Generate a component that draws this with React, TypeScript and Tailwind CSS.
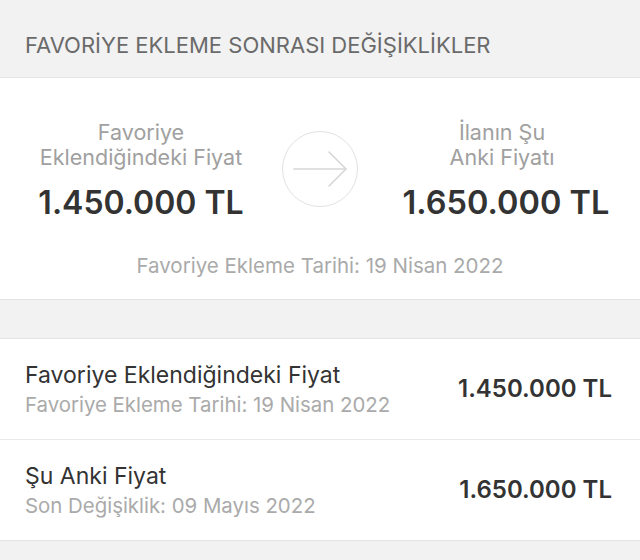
const font = { fontFamily: 'Inter, "Liberation Sans", Arial, sans-serif' };

function PriceRow({ title, sub, price }: { title: string; sub: string; price: string }) {
  return (
    <div className="flex h-[100px] items-center bg-white pl-[25px] pr-[28px]">
      <div className="flex-1">
        <div className="text-[23px] leading-[28px] text-[#333]">{title}</div>
        <div className="mt-[3px] text-[20.4px] leading-[26px] text-[#aaa]">{sub}</div>
      </div>
      <div className="text-[24px] font-semibold text-[#333]">{price}</div>
    </div>
  );
}

function Arrow() {
  return (
    <svg width="56" height="38" viewBox="0 0 56 38" fill="none" stroke="#d6d6d6" strokeWidth="1.6" strokeLinecap="round" strokeLinejoin="round">
      <path d="M2 19H54" />
      <path d="M37 2L54 19L37 36" />
    </svg>
  );
}

export default function App() {
  return (
    <div className="h-[560px] w-[640px] overflow-hidden bg-[#f2f2f2]" style={font}>
      <div className="flex h-[78px] items-end border-b border-[#e4e4e4] pb-[20px] pl-[25px]">
        <span className="text-[22px] leading-[24px] text-[#6a6a6a]">FAVORİYE EKLEME SONRASI DEĞİŞİKLİKLER</span>
      </div>

      <div className="h-[222px] border-b border-[#e4e4e4] bg-white pt-[42px]">
        <div className="flex items-start">
          <div className="flex w-[282px] flex-col items-center">
            <div className="text-center text-[21.5px] leading-[25px] text-[#a0a0a0]">
              Favoriye
              <br />
              Eklendiğindeki Fiyat
            </div>
            <div className="mt-[13px] text-[32px] font-semibold leading-[40px] text-[#333]">1.450.000 TL</div>
          </div>
          <div className="flex w-[76px] justify-center pt-[11px]">
            <div className="flex h-[76px] w-[76px] shrink-0 items-center justify-center rounded-full border border-[#e2e2e2]">
              <Arrow />
            </div>
          </div>
          <div className="flex flex-1 flex-col items-center pl-[6px]">
            <div className="text-center text-[21.5px] leading-[25px] text-[#a0a0a0]">
              İlanın Şu
              <br />
              Anki Fiyatı
            </div>
            <div className="mt-[13px] pl-[8px] text-[32.5px] font-semibold leading-[40px] text-[#333]">1.650.000 TL</div>
          </div>
        </div>
        <div className="mt-[30px] text-center text-[20.5px] leading-[26px] text-[#aaa]">
          Favoriye Ekleme Tarihi: 19 Nisan 2022
        </div>
      </div>

      <div className="h-[38px]" />

      <div className="border-y border-[#e4e4e4]">
        <PriceRow
          title="Favoriye Eklendiğindeki Fiyat"
          sub="Favoriye Ekleme Tarihi: 19 Nisan 2022"
          price="1.450.000 TL"
        />
        <div className="h-px bg-[#e8e8e8]" />
        <PriceRow title="Şu Anki Fiyat" sub="Son Değişiklik: 09 Mayıs 2022" price="1.650.000 TL" />
      </div>
    </div>
  );
}
